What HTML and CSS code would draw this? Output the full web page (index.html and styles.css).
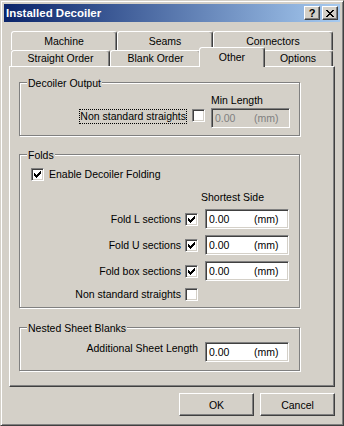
FILE: index.html
```html
<!DOCTYPE html>
<html lang="en">
<head>
  <meta charset="UTF-8" />
  <title>Installed Decoiler</title>
  <link rel="stylesheet" href="styles.css">
</head>
<body>
  <div class="window">
    <div class="titlebar">
      <span class="title">Installed Decoiler</span>
      <div class="caption-buttons">
        <span class="cap-btn raised">?</span>
        <span class="cap-btn raised">
          <svg width="8" height="7" viewBox="0 0 8 7"><path d="M0 0h2v1H0zM6 0h2v1H6zM1 1h2v1H1zM5 1h2v1H5zM2 2h4v1H2zM3 3h2v1H3zM2 4h4v1H2zM1 5h2v1H1zM5 5h2v1H5zM0 6h2v1H0zM6 6h2v1H6z"/></svg>
        </span>
      </div>
    </div>

    <div class="client">
      <div class="tab-rows">
        <div class="tab-row row-back">
          <div class="tab">Machine</div>
          <div class="tab">Seams</div>
          <div class="tab">Connectors</div>
        </div>
        <div class="tab-row row-front">
          <div class="tab">Straight Order</div>
          <div class="tab">Blank Order</div>
          <div class="tab active">Other</div>
          <div class="tab">Options</div>
        </div>
      </div>

      <div class="panel">
        <div class="group group-output">
          <span class="group-title">Decoiler Output</span>
          <div class="output-grid">
            <span class="col-head">Min Length</span>
            <span class="focus-label">Non standard straights</span>
            <span class="check"></span>
            <div class="edit disabled"><span class="value">0.00</span><span>(mm)</span></div>
          </div>
        </div>

        <div class="group group-folds">
          <span class="group-title">Folds</span>
          <div class="check-row">
            <span class="check"><svg width="7" height="7" viewBox="0 0 7 7"><path d="M0 2h1v3H0zM1 3h1v3H1zM2 4h1v3H2zM3 3h1v3H3zM4 2h1v3H4zM5 1h1v3H5zM6 0h1v3H6z"/></svg></span>
            <span>Enable Decoiler Folding</span>
          </div>
          <div class="folds-grid">
            <span class="col-head">Shortest Side</span>

            <span class="row-label">Fold L sections</span>
            <span class="check"><svg width="7" height="7" viewBox="0 0 7 7"><path d="M0 2h1v3H0zM1 3h1v3H1zM2 4h1v3H2zM3 3h1v3H3zM4 2h1v3H4zM5 1h1v3H5zM6 0h1v3H6z"/></svg></span>
            <div class="edit"><span class="value">0.00</span><span>(mm)</span></div>

            <span class="row-label">Fold U sections</span>
            <span class="check"><svg width="7" height="7" viewBox="0 0 7 7"><path d="M0 2h1v3H0zM1 3h1v3H1zM2 4h1v3H2zM3 3h1v3H3zM4 2h1v3H4zM5 1h1v3H5zM6 0h1v3H6z"/></svg></span>
            <div class="edit"><span class="value">0.00</span><span>(mm)</span></div>

            <span class="row-label">Fold box sections</span>
            <span class="check"><svg width="7" height="7" viewBox="0 0 7 7"><path d="M0 2h1v3H0zM1 3h1v3H1zM2 4h1v3H2zM3 3h1v3H3zM4 2h1v3H4zM5 1h1v3H5zM6 0h1v3H6z"/></svg></span>
            <div class="edit"><span class="value">0.00</span><span>(mm)</span></div>

            <span class="row-label">Non standard straights</span>
            <span class="check last"></span>
          </div>
        </div>

        <div class="group group-nested">
          <span class="group-title">Nested Sheet Blanks</span>
          <div class="nested-row">
            <span>Additional Sheet Length</span>
            <div class="edit"><span class="value">0.00</span><span>(mm)</span></div>
          </div>
        </div>
      </div>

      <div class="dialog-buttons">
        <button class="btn raised">OK</button>
        <button class="btn raised">Cancel</button>
      </div>
    </div>
  </div>
</body>
</html>
```

FILE: styles.css
```css
* {
  margin: 0;
  padding: 0;
  box-sizing: border-box;
}

html, body {
  width: 100%;
  height: 100%;
  overflow: hidden;
}

body {
  font-family: "Liberation Sans", Arial, sans-serif;
  font-size: 10.5px;
  line-height: 13px;
  color: #000;
  background: #d4d0c8;
}

.window {
  width: 344px;
  height: 426px;
  padding: 3px;
  border: 1px solid;
  border-color: #d4d0c8 #404040 #404040 #d4d0c8;
  box-shadow: inset 1px 1px 0 #fff, inset -1px -1px 0 #808080;
  background: #d4d0c8;
  display: flex;
  flex-direction: column;
}

/* 3d look shared by buttons */
.raised {
  border: 1px solid;
  border-color: #fff #404040 #404040 #fff;
  box-shadow: inset -1px -1px 0 #808080;
  background: #d4d0c8;
}

.titlebar {
  height: 18px;
  display: flex;
  align-items: center;
  justify-content: space-between;
  padding: 0 2px 0 2px;
  background: linear-gradient(to right, #0a246a, #a6caf0);
}

.title {
  color: #fff;
  font-weight: bold;
  font-size: 11.5px;
}

.caption-buttons {
  display: flex;
  gap: 2px;
}

.cap-btn {
  width: 16px;
  height: 14px;
  display: flex;
  align-items: center;
  justify-content: center;
  font-weight: bold;
  font-size: 11px;
  line-height: 12px;
}

.client {
  flex: 1;
  display: flex;
  flex-direction: column;
  padding: 9px 5px 0 5px;
}

.tab-rows {
  padding-left: 2px;
}

.tab-row {
  display: grid;
  height: 19px;
}

.row-back {
  grid-template-columns: 106px 96px 120px;
}

.row-front {
  margin-top: -3px;
  grid-template-columns: 99px 91px 62px 70px;
  align-items: end;
}

.tab {
  height: 19px;
  display: flex;
  align-items: center;
  justify-content: center;
  border: 1px solid;
  border-bottom: 0;
  border-color: #fff #404040 transparent #fff;
  border-radius: 3px 3px 0 0;
  box-shadow: inset -1px 0 0 #808080;
  background: #d4d0c8;
}

.row-front .tab {
  height: 16px;
}

.row-front .tab.active {
  height: 20px;
  margin: 0 -2px -1px;
  position: relative;
  z-index: 1;
}

.panel {
  height: 321px;
  border: 1px solid;
  border-color: #fff #404040 #404040 #fff;
  box-shadow: inset -1px -1px 0 #808080;
  padding: 15px 0 0 9px;
}

.group {
  position: relative;
  width: 281px;
  border: 1px solid #808080;
  box-shadow: inset 1px 1px 0 #fff, 1px 1px 0 #fff;
}

.group-title {
  position: absolute;
  top: -6px;
  left: 7px;
  padding: 0 1px;
  background: #d4d0c8;
}

.group-folds {
  margin-top: 18px;
  padding: 13px 10px 6px 11px;
}

.group-nested {
  margin-top: 19px;
}

.col-head {
  grid-column: 3;
}

.check {
  width: 13px;
  height: 13px;
  display: flex;
  align-items: center;
  justify-content: center;
  border: 1px solid;
  border-color: #808080 #fff #fff #808080;
  box-shadow: inset 1px 1px 0 #404040, inset -1px -1px 0 #d4d0c8;
  background: #fff;
}

.edit {
  height: 20px;
  display: flex;
  align-items: center;
  padding-left: 3px;
  border: 1px solid;
  border-color: #808080 #fff #fff #808080;
  box-shadow: inset 1px 1px 0 #404040, inset -1px -1px 0 #d4d0c8;
  background: #fff;
}

.edit .value {
  width: 45px;
}

.edit.disabled {
  background: #d4d0c8;
  color: #808080;
}

.edit.disabled .value {
  width: 39px;
}

/* Decoiler Output */
.output-grid {
  display: grid;
  grid-template-columns: 1fr 19px 79px;
  row-gap: 1px;
  padding: 11px 9px 7px 0;
}

.focus-label {
  justify-self: end;
  align-self: start;
  margin: 1px 5px 0 0;
  border: 1px dotted #000;
}

.output-grid .check {
  margin-top: 1px;
}

/* Folds */
.check-row {
  display: flex;
  align-items: center;
  gap: 5px;
}

.folds-grid {
  display: grid;
  grid-template-columns: 1fr 20px 84px;
  grid-template-rows: 12px 20px 20px 20px 14px;
  row-gap: 6px;
  align-items: center;
  margin-top: 10px;
}

.folds-grid .col-head {
  align-self: start;
  margin-left: -4px;
}

.row-label {
  justify-self: end;
  margin-right: 4px;
}

.check.last {
  align-self: end;
}

/* Nested Sheet Blanks */
.nested-row {
  display: flex;
  justify-content: flex-end;
  align-items: flex-start;
  gap: 7px;
  padding: 14px 10px 8px 0;
}

.nested-row .edit {
  width: 84px;
}

.dialog-buttons {
  display: flex;
  justify-content: flex-end;
  gap: 6px;
  margin-top: 6px;
}

.btn {
  width: 75px;
  height: 23px;
  font-family: inherit;
  font-size: 10.5px;
  color: #000;
}
```
